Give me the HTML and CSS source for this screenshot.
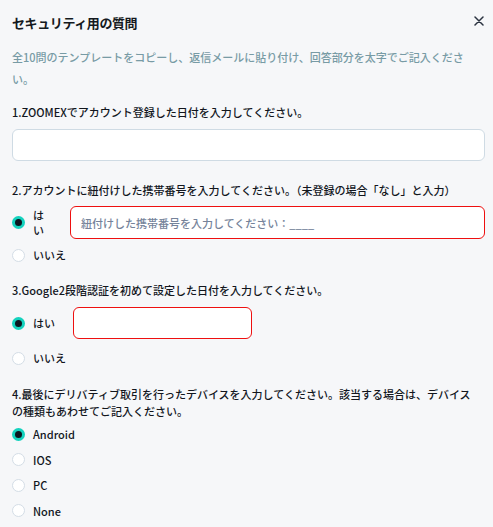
FILE: index.html
```html
<!DOCTYPE html>
<html lang="ja">
<head>
<meta charset="utf-8">
<link rel="stylesheet" href="styles.css">
</head>
<body>
<div class="modal">
  <div class="header">
    <div class="title">セキュリティ用の質問</div>
    <svg class="close" width="10" height="10" viewBox="0 0 10 10"><path d="M1 1L9 9M9 1L1 9" stroke="#2b3341" stroke-width="1.5" stroke-linecap="round"/></svg>
  </div>
  <p class="desc">全10問のテンプレートをコピーし、返信メールに貼り付け、回答部分を太字でご記入ください。</p>

  <div class="q q1">1.ZOOMEXでアカウント登録した日付を入力してください。</div>
  <div class="input full"></div>

  <div class="q q2">2.アカウントに紐付けした携帯番号を入力してください。（未登録の場合「なし」と入力）</div>
  <div class="opt opt-input">
    <span class="radio on"></span>
    <span class="label narrow">はい</span>
    <div class="input red wide"><span class="ph">紐付けした携帯番号を入力してください：____</span></div>
  </div>
  <div class="opt no1">
    <span class="radio"></span>
    <span class="label">いいえ</span>
  </div>

  <div class="q q3">3.Google2段階認証を初めて設定した日付を入力してください。</div>
  <div class="opt opt-input short">
    <span class="radio on"></span>
    <span class="label">はい</span>
    <div class="input red small"></div>
  </div>
  <div class="opt no2">
    <span class="radio"></span>
    <span class="label">いいえ</span>
  </div>

  <div class="q q4">4.最後にデリバティブ取引を行ったデバイスを入力してください。該当する場合は、デバイスの種類もあわせてご記入ください。</div>
  <div class="list">
    <div class="opt"><span class="radio on"></span><span class="label">Android</span></div>
    <div class="opt"><span class="radio"></span><span class="label">IOS</span></div>
    <div class="opt"><span class="radio"></span><span class="label">PC</span></div>
    <div class="opt"><span class="radio"></span><span class="label">None</span></div>
  </div>
</div>
</body>
</html>
```

FILE: styles.css
```css
html, body {
  margin: 0;
  padding: 0;
  background: #f6f7f9;
}
body {
  font-family: "Noto Sans CJK JP", "Noto Sans", sans-serif;
  color: #1d222a;
}
.modal {
  display: flex;
  flex-direction: column;
  padding: 0 8px 0 12px;
}
.header {
  height: 44px;
  display: flex;
  align-items: center;
  justify-content: space-between;
}
.title {
  font-size: 13px;
  font-weight: 700;
  letter-spacing: -0.4px;
  color: #141920;
}
.close {
  margin-right: 1px;
  margin-top: -3px;
}
.desc {
  margin: 2px 8px 0 0;
  font-size: 11px;
  line-height: 22px;
  color: #789ba5;
  font-weight: 500;
}
.q {
  font-size: 11px;
  line-height: 18px;
  font-weight: 500;
  color: #12161d;
}
.q1 { margin-top: 13px; }
.q2 { margin-top: 20px; }
.q3 { margin-top: 17px; }
.q4 { margin-top: 19px; line-height: 17px; margin-right: 6px; }
.input {
  background: #fff;
  border: 1px solid #cfdbe4;
  border-radius: 6px;
  box-sizing: border-box;
}
.input.full {
  margin-top: 8px;
  height: 32px;
}
.input.red {
  border-color: #ee1010;
}
.wide {
  flex: 1;
  height: 33px;
  margin-left: 26px;
  display: flex;
  align-items: center;
  padding-left: 10px;
}
.small {
  width: 179px;
  height: 32px;
  margin-left: 18px;
}
.ph {
  font-size: 11px;
  color: #75839a;
  font-weight: 500;
}
.opt {
  display: flex;
  align-items: center;
  font-size: 11px;
  font-weight: 500;
}
.opt-input { margin-top: 7px; }
.short { margin-top: 8px; }
.no1 { margin-top: 7px; height: 18px; }
.no2 { margin-top: 10px; height: 18px; }
.label {
  margin-left: 8px;
  line-height: 18px;
  color: #12161d;
}
.label.narrow {
  width: 11px;
  line-height: 15px;
}
.radio {
  width: 13px;
  height: 13px;
  border-radius: 50%;
  box-sizing: border-box;
  background: #fff;
  border: 1px solid #d4dde6;
  flex: none;
  position: relative;
}
.radio.on {
  background: #14d2be;
  border: none;
}
.radio.on::after {
  content: "";
  position: absolute;
  left: 3px;
  top: 3px;
  width: 7px;
  height: 7px;
  border-radius: 50%;
  background: #0c1620;
}
.list {
  margin-top: 5px;
  display: flex;
  flex-direction: column;
  gap: 7.6px;
}
.list .opt { height: 18px; }
```
